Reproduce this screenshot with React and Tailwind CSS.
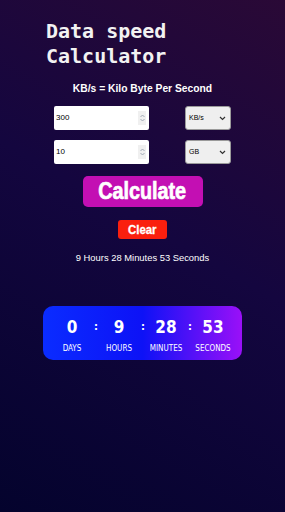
import { useState } from "react"

const Spinner = () => (
  <svg width="7" height="10" viewBox="0 0 7 10" className="text-gray-400">
    <path d="M1.5 4 L3.5 2 L5.5 4" fill="none" stroke="currentColor" strokeWidth="0.9" />
    <path d="M1.5 6 L3.5 8 L5.5 6" fill="none" stroke="currentColor" strokeWidth="0.9" />
  </svg>
)

const Chevron = () => (
  <svg width="7" height="5" viewBox="0 0 7 5">
    <path d="M1 1 L3.5 3.5 L6 1" fill="none" stroke="#333" strokeWidth="1.2" />
  </svg>
)

const InputRow = ({ value, unit }) => (
  <div className="flex items-center gap-[36px]">
    <div className="flex h-[24px] w-[95px] items-center justify-between rounded-[2px] bg-white pl-[2px] pr-[3px]">
      <span className="text-[8px] text-black">{value}</span>
      <span className="flex h-[14px] w-[8px] items-center justify-center bg-[#f0f0f0]">
        <Spinner />
      </span>
    </div>
    <div className="flex h-[24px] w-[46px] items-center justify-between rounded-[3px] border border-[#9a9a9a] bg-[#efefef] pl-[3px] pr-[4px]">
      <span className="text-[7px] text-black">{unit}</span>
      <Chevron />
    </div>
  </div>
)

const TimeCell = ({ value, label }) => (
  <div className="flex w-[44px] flex-col items-center">
    <span className="text-[17px] font-bold leading-[20px]">{value}</span>
    <span className="mt-[7px] text-[8px] leading-[10px]">{label}</span>
  </div>
)

const Colon = () => <span className="w-[3px] text-center text-[11px] font-bold leading-[20px]">:</span>

export default function App() {
  const [speed] = useState("300")
  const [size] = useState("10")

  return (
    <div className="flex h-[512px] w-[285px] flex-col items-center bg-[linear-gradient(210deg,#2a0936_0%,#14063f_45%,#04032d_100%)] font-['Liberation_Sans',Arial,sans-serif] text-white">
      <h1 className="mt-[19px] w-full pl-[46px] font-['DejaVu_Sans_Mono',monospace] text-[20px] font-bold leading-[25px] text-[#f2f2f2]">
        Data speed
        <br />
        Calculator
      </h1>

      <p className="mt-[13px] text-[10.3px] font-bold leading-[13px]">KB/s = Kilo Byte Per Second</p>

      <div className="mt-[11px] flex flex-col gap-[10px]">
        <InputRow value={speed} unit="KB/s" />
        <InputRow value={size} unit="GB" />
      </div>

      <button className="mt-[12px] flex h-[31px] w-[120px] items-center justify-center rounded-[5px] bg-[#c30fb3]">
        <span className="inline-block scale-x-[0.86] text-[23px] font-bold leading-none [-webkit-text-stroke:0.7px_white]">
          Calculate
        </span>
      </button>

      <button className="mt-[13px] flex h-[19px] w-[49px] items-center justify-center rounded-[3px] bg-[#fa1f0e]">
        <span className="inline-block scale-x-[0.88] text-[13px] font-bold leading-none [-webkit-text-stroke:0.3px_white]">
          Clear
        </span>
      </button>

      <p className="mt-[13px] text-[9.4px] leading-[12px]">9 Hours 28 Minutes 53 Seconds</p>

      <div className="mt-[42px] flex h-[54px] w-[199px] items-start justify-center rounded-[10px] bg-[linear-gradient(90deg,#0a2cff_0%,#0d12f6_50%,#9a10f8_100%)] pt-[11px] font-['DejaVu_Sans_Condensed','Liberation_Sans',sans-serif]">
        <TimeCell value="0" label="DAYS" />
        <Colon />
        <TimeCell value="9" label="HOURS" />
        <Colon />
        <TimeCell value="28" label="MINUTES" />
        <Colon />
        <TimeCell value="53" label="SECONDS" />
      </div>
    </div>
  )
}
